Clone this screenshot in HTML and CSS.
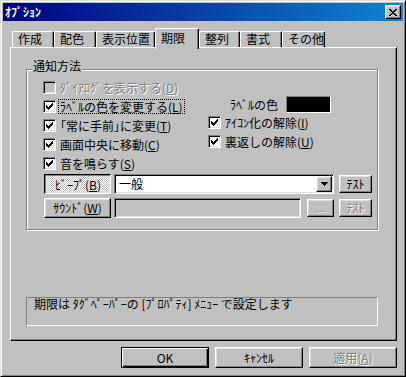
FILE: index.html
```html
<!DOCTYPE html>
<html lang="ja">
<head>
<meta charset="utf-8">
<title>ｵﾌﾟｼｮﾝ</title>
<link rel="stylesheet" href="styles.css">
</head>
<body>
<div class="window">
  <div class="titlebar">
    <span class="title">ｵﾌﾟｼｮﾝ</span>
    <button class="btn close" aria-label="閉じる">
      <svg width="8" height="7" viewBox="0 0 8 7" shape-rendering="crispEdges"><path d="M0 0h2v1H0zM6 0h2v1H6zM1 1h2v1H1zM5 1h2v1H5zM2 2h4v1H2zM3 3h2v1H3zM2 4h4v1H2zM1 5h2v1H1zM5 5h2v1H5zM0 6h2v1H0zM6 6h2v1H6z" fill="#000"/></svg>
    </button>
  </div>
  <div class="content">
    <div class="tabs">
      <div class="tab tab-42">作成</div>
      <div class="tab tab-42">配色</div>
      <div class="tab tab-59">表示位置</div>
      <div class="tab tab-44 selected">期限</div>
      <div class="tab tab-41">整列</div>
      <div class="tab tab-42">書式</div>
      <div class="tab tab-43">その他</div>
    </div>
    <div class="panel">
      <div class="group">
        <span class="legend">通知方法</span>
        <div class="group-grid">
          <div class="col-left">
            <div class="row disabled"><span class="cb"></span><span class="lbl">ﾀﾞｲｱﾛｸﾞを表示する(<u>D</u>)</span></div>
            <div class="row"><span class="cb checked"><svg width="7" height="7" viewBox="0 0 7 7" shape-rendering="crispEdges"><path d="M6 0h1v1H6zM5 1h2v1H5zM0 2h1v1H0zM4 2h3v1H4zM0 3h2v1H0zM3 3h3v1H3zM0 4h5v1H0zM1 5h3v1H1zM2 6h1v1H2z" fill="#000"/></svg></span><span class="lbl focus">ﾗﾍﾞﾙの色を変更する(<u>L</u>)</span></div>
            <div class="row"><span class="cb checked"><svg width="7" height="7" viewBox="0 0 7 7" shape-rendering="crispEdges"><path d="M6 0h1v1H6zM5 1h2v1H5zM0 2h1v1H0zM4 2h3v1H4zM0 3h2v1H0zM3 3h3v1H3zM0 4h5v1H0zM1 5h3v1H1zM2 6h1v1H2z" fill="#000"/></svg></span><span class="lbl"><span class="palt">「</span>常に手前<span class="palt">」</span>に変更(<u>T</u>)</span></div>
            <div class="row"><span class="cb checked"><svg width="7" height="7" viewBox="0 0 7 7" shape-rendering="crispEdges"><path d="M6 0h1v1H6zM5 1h2v1H5zM0 2h1v1H0zM4 2h3v1H4zM0 3h2v1H0zM3 3h3v1H3zM0 4h5v1H0zM1 5h3v1H1zM2 6h1v1H2z" fill="#000"/></svg></span><span class="lbl">画面中央に移動(<u>C</u>)</span></div>
            <div class="row"><span class="cb checked"><svg width="7" height="7" viewBox="0 0 7 7" shape-rendering="crispEdges"><path d="M6 0h1v1H6zM5 1h2v1H5zM0 2h1v1H0zM4 2h3v1H4zM0 3h2v1H0zM3 3h3v1H3zM0 4h5v1H0zM1 5h3v1H1zM2 6h1v1H2z" fill="#000"/></svg></span><span class="lbl">音を鳴らす(<u>S</u>)</span></div>
          </div>
          <div class="col-right">
            <div class="colorrow"><span class="lbl">ﾗﾍﾞﾙの色</span><span class="swatch"></span></div>
            <div class="row"><span class="cb checked"><svg width="7" height="7" viewBox="0 0 7 7" shape-rendering="crispEdges"><path d="M6 0h1v1H6zM5 1h2v1H5zM0 2h1v1H0zM4 2h3v1H4zM0 3h2v1H0zM3 3h3v1H3zM0 4h5v1H0zM1 5h3v1H1zM2 6h1v1H2z" fill="#000"/></svg></span><span class="lbl">ｱｲｺﾝ化の解除(<u>I</u>)</span></div>
            <div class="row"><span class="cb checked"><svg width="7" height="7" viewBox="0 0 7 7" shape-rendering="crispEdges"><path d="M6 0h1v1H6zM5 1h2v1H5zM0 2h1v1H0zM4 2h3v1H4zM0 3h2v1H0zM3 3h3v1H3zM0 4h5v1H0zM1 5h3v1H1zM2 6h1v1H2z" fill="#000"/></svg></span><span class="lbl">裏返しの解除(<u>U</u>)</span></div>
          </div>
        </div>
        <div class="ctlrow first">
          <button class="btn pressed side">ﾋﾞｰﾌﾟ(<u>B</u>)</button>
          <div class="combo">
            <span class="combo-text">一般</span>
            <span class="btn dropbtn"><svg width="7" height="4" viewBox="0 0 7 4" shape-rendering="crispEdges"><path d="M0 0h7v1H0zM1 1h5v1H1zM2 2h3v1H2zM3 3h1v1H3z" fill="#000"/></svg></span>
          </div>
          <button class="btn test">ﾃｽﾄ</button>
        </div>
        <div class="ctlrow second">
          <button class="btn side">ｻｳﾝﾄﾞ(<u>W</u>)</button>
          <div class="field"></div>
          <button class="btn dots dis">...</button>
          <button class="btn test dis">ﾃｽﾄ</button>
        </div>
      </div>
      <div class="info">期限は ﾀｸﾞﾍﾟｰﾊﾟｰの [ﾌﾟﾛﾊﾟﾃｨ] ﾒﾆｭｰ で設定します</div>
    </div>
    <div class="buttons">
      <button class="btn dlg default">OK</button>
      <button class="btn dlg">ｷｬﾝｾﾙ</button>
      <button class="btn dlg dis">適用(<u>A</u>)</button>
    </div>
  </div>
</div>
</body>
</html>
```

FILE: styles.css
```css
* {
  box-sizing: border-box;
  margin: 0;
  padding: 0;
}

html, body {
  margin: 0;
  background: #c0c0c0;
  font-family: "Noto Sans CJK JP", "Noto Sans", sans-serif;
  font-size: 12px;
  color: #000;
}

u {
  text-underline-offset: 1px;
}

.window {
  width: 406px;
  height: 377px;
  border: 1px solid;
  border-color: #dfdfdf #000 #000 #dfdfdf;
  box-shadow: inset 1px 1px #fff, inset -1px -1px #808080;
  padding: 2px;
  background: #c0c0c0;
  display: flex;
  flex-direction: column;
}

.titlebar {
  height: 18px;
  flex: 0 0 18px;
  background: linear-gradient(90deg, #000080, #1084d0);
  color: #fff;
  display: flex;
  align-items: center;
  justify-content: space-between;
  padding: 0 2px 0 2px;
}

.title {
  font-weight: bold;
  line-height: 14px;
}

.btn {
  font-family: inherit;
  font-size: 12px;
  color: #000;
  background: #c0c0c0;
  border: 1px solid;
  border-color: #fff #000 #000 #fff;
  box-shadow: inset -1px -1px #808080, inset 1px 1px #dfdfdf;
  display: inline-flex;
  align-items: center;
  justify-content: center;
  line-height: 12px;
}

.close {
  width: 16px;
  height: 14px;
}

.close svg {
  display: block;
}

.content {
  padding: 7px 6px 0 7px;
  display: flex;
  flex-direction: column;
}

.tabs {
  height: 19px;
  display: flex;
  align-items: flex-end;
  padding-left: 2px;
}

.tab {
  height: 16px;
  border-left: 1px solid #fff;
  border-top: 1px solid #fff;
  border-right: 1px solid #000;
  border-radius: 2px 2px 0 0;
  box-shadow: inset -1px 0 #808080;
  padding-left: 5px;
  line-height: 14px;
  white-space: nowrap;
  background: #c0c0c0;
}

.tab.selected {
  height: 21px;
  margin-bottom: -2px;
  position: relative;
  z-index: 1;
  line-height: 16px;
  padding-top: 1px;
}

.tab-41 { width: 41px; }
.tab-42 { width: 42px; }
.tab-43 { width: 43px; }
.tab-44 { width: 44px; }
.tab-59 { width: 59px; }

.panel {
  height: 294px;
  border: 1px solid;
  border-color: #fff #000 #000 #fff;
  box-shadow: inset -1px -1px #808080;
  padding: 21px 0 0 15px;
}

.group {
  position: relative;
  width: 352px;
  height: 161px;
  border: 1px solid #808080;
  box-shadow: inset 1px 1px #fff, 1px 1px #fff;
  padding: 8px 0 0 16px;
}

.legend {
  position: absolute;
  top: -11px;
  left: 5px;
  padding: 0 1px;
  background: #c0c0c0;
  line-height: 14px;
}

.group-grid {
  display: grid;
  grid-template-columns: 165px 1fr;
}

.row {
  height: 19px;
  display: flex;
  align-items: center;
  gap: 4px;
  white-space: nowrap;
}

.lbl {
  line-height: 13px;
}

.lbl.focus {
  outline: 1px dotted #000;
  padding: 0 1px;
  margin-left: -1px;
}

.palt {
  font-feature-settings: "palt";
}

.cb {
  width: 13px;
  height: 13px;
  flex: 0 0 13px;
  border: 1px solid;
  border-color: #808080 #fff #fff #808080;
  box-shadow: inset 1px 1px #000, inset -1px -1px #dfdfdf;
  background: #fff;
  padding: 2px 0 0 2px;
}

.cb svg {
  display: block;
}

.disabled .cb {
  background: #c0c0c0;
}

.disabled .lbl,
.btn.dis {
  color: #808080;
  text-shadow: 1px 1px 0 #fff;
}

.col-right {
  padding-top: 18px;
}

.colorrow {
  height: 17px;
  display: flex;
  align-items: center;
  gap: 8px;
  padding-left: 22px;
  white-space: nowrap;
}

.swatch {
  width: 45px;
  height: 17px;
  border: 1px solid;
  border-color: #808080 #fff #fff #808080;
  background: #000;
}

.ctlrow {
  display: flex;
  align-items: center;
  margin-left: 1px;
  height: 20px;
}

.ctlrow.first {
  margin-top: 1px;
}

.ctlrow.second {
  margin-top: 4px;
}

.side {
  width: 67px;
  height: 20px;
  margin-right: 3px;
}

.pressed {
  border-color: #000 #fff #fff #000;
  box-shadow: inset 1px 1px #808080, inset -1px -1px #dfdfdf;
  background: repeating-conic-gradient(#fff 0 25%, #c0c0c0 0 50%) 0 0 / 2px 2px;
  padding: 1px 0 0 1px;
}

.combo {
  width: 220px;
  height: 20px;
  border: 1px solid;
  border-color: #808080 #fff #fff #808080;
  box-shadow: inset 1px 1px #000, inset -1px -1px #dfdfdf;
  background: #fff;
  display: flex;
  align-items: center;
  justify-content: space-between;
  padding: 1px;
}

.combo-text {
  padding-left: 3px;
  line-height: 14px;
}

.dropbtn {
  width: 16px;
  height: 16px;
  flex: 0 0 16px;
}

.dropbtn svg {
  display: block;
}

.test {
  width: 33px;
  height: 18px;
  margin-left: 5px;
}

.field {
  width: 187px;
  height: 20px;
  border: 1px solid;
  border-color: #808080 #fff #fff #808080;
  box-shadow: inset 1px 1px #000, inset -1px -1px #dfdfdf;
  background: #c0c0c0;
}

.dots {
  width: 27px;
  height: 18px;
  margin-left: 6px;
  align-items: flex-end;
  padding-bottom: 2px;
  font-size: 10px;
}

.info {
  width: 352px;
  height: 29px;
  margin-top: 67px;
  border: 1px solid;
  border-color: #808080 #fff #fff #808080;
  padding-left: 7px;
  line-height: 12px;
  white-space: nowrap;
}

.buttons {
  display: flex;
  justify-content: flex-end;
  gap: 6px;
  margin-top: 6px;
}

.dlg {
  width: 88px;
  height: 21px;
}

.dlg.default {
  border-color: #000;
  box-shadow: inset 1px 1px #fff, inset -1px -1px #000, inset -2px -2px #808080;
}
```
